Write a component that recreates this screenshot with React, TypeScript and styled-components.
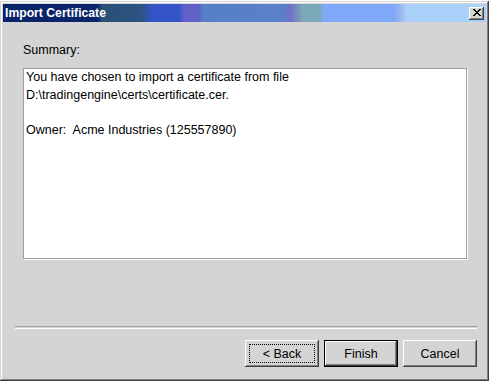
import React from "react";
import styled, { createGlobalStyle } from "styled-components";

const Global = createGlobalStyle`
  html, body { margin: 0; padding: 0; background: #ffffff; }
  body { font-family: "Liberation Sans", Arial, sans-serif; }
`;

const Window = styled.div`
  box-sizing: border-box;
  width: 489px;
  height: 380px;
  margin-top: 1px;
  padding: 3px 3px 3px 3px;
  background: #d4d4d4;
  box-shadow: inset -1px -1px #404040, inset 1px 1px #d4d4d4,
    inset -2px -2px #808080, inset 2px 2px #ffffff;
  display: flex;
  flex-direction: column;
`;

const TitleBar = styled.div`
  height: 18px;
  display: flex;
  align-items: center;
  justify-content: space-between;
  padding: 0 2px 0 2px;
  background: linear-gradient(
    90deg,
    #0a246a 0%,
    #0a246a 19.5%,
    #2a5078 20.5%,
    #2b5480 28.5%,
    #3455c8 31%,
    #3455c8 36.5%,
    #6060c8 37.5%,
    #6060c8 40.5%,
    #5580c8 41.5%,
    #5a80c8 58%,
    #7070c8 59.5%,
    #7a90c0 61%,
    #7aa8b8 62%,
    #7aa8b8 65.5%,
    #7fa8f8 66.5%,
    #80a8f8 81%,
    #a0b8f0 82.5%,
    #a8d0f8 83.5%,
    #a8d0f8 100%
  );
`;

const Title = styled.span`
  color: #ffffff;
  font-family: Tahoma, "Liberation Sans", Arial, sans-serif;
  font-weight: bold;
  font-size: 12.2px;
`;

const CloseButton = styled.div`
  box-sizing: border-box;
  width: 15px;
  height: 13px;
  background: #d4d4d4;
  box-shadow: inset -1px -1px #404040, inset 1px 1px #ffffff,
    inset -2px -2px #808080;
  display: flex;
  align-items: center;
  justify-content: center;
  padding-bottom: 1px;
`;

const Body = styled.div`
  flex: 1;
  display: flex;
  flex-direction: column;
`;

const Label = styled.div`
  margin: 21px 0 0 20px;
  font-size: 12.5px;
  line-height: 14px;
  color: #000;
`;

const SummaryBox = styled.div`
  box-sizing: border-box;
  margin: 11px 19px 0 20px;
  height: 191px;
  background: #ffffff;
  border: 1px solid #a0a0a0;
  box-shadow: 1px 1px 0 #ffffff;
  padding: 0 2px;
  font-size: 12.5px;
  line-height: 17.5px;
  color: #000;
`;

const Line = styled.div`
  min-height: 17.5px;
  white-space: pre;
`;

const Separator = styled.div`
  margin: 67px 9px 0 12px;
  height: 1px;
  border-top: 1px solid #a0a0a0;
  border-bottom: 1px solid #ffffff;
`;

const ButtonRow = styled.div`
  display: flex;
  justify-content: flex-end;
  gap: 5px;
  margin: 11px 9px 0 0;
`;

const Button = styled.div<{ $default?: boolean; $focused?: boolean }>`
  box-sizing: border-box;
  width: 74px;
  height: 27px;
  position: relative;
  display: flex;
  align-items: center;
  justify-content: center;
  font-size: 12.5px;
  color: #000;
  background: #d4d4d4;
  box-shadow: ${(p) =>
    p.$default
      ? "inset 0 0 0 1px #000, inset -2px -2px #404040, inset 2px 2px #ffffff, inset -3px -3px #808080"
      : "inset -1px -1px #404040, inset 1px 1px #ffffff, inset -2px -2px #808080"};
  &::after {
    content: "";
    display: ${(p) => (p.$focused ? "block" : "none")};
    position: absolute;
    left: 4px;
    top: 4px;
    right: 4px;
    bottom: 4px;
    border: 1px dotted #000;
  }
`;

export default function App() {
  return (
    <>
      <Global />
      <Window>
        <TitleBar>
          <Title>Import Certificate</Title>
          <CloseButton>
            <svg width="8" height="7" viewBox="0 0 8 7">
              <path
                d="M0 0h2v1h1v1h2v-1h1v-1h2v1h-1v1h-1v1h-1v1h1v1h1v1h1v1h-2v-1h-1v-1h-2v1h-1v1h-2v-1h1v-1h1v-1h1v-1h-1v-1h-1v-1h-1z"
                fill="#000"
              />
            </svg>
          </CloseButton>
        </TitleBar>
        <Body>
          <Label>Summary:</Label>
          <SummaryBox>
            <Line>You have chosen to import a certificate from file</Line>
            <Line>D:\tradingengine\certs\certificate.cer.</Line>
            <Line> </Line>
            <Line>Owner:  Acme Industries (125557890)</Line>
          </SummaryBox>
          <Separator />
          <ButtonRow>
            <Button $focused>&lt; Back</Button>
            <Button $default>Finish</Button>
            <Button>Cancel</Button>
          </ButtonRow>
        </Body>
      </Window>
    </>
  );
}
